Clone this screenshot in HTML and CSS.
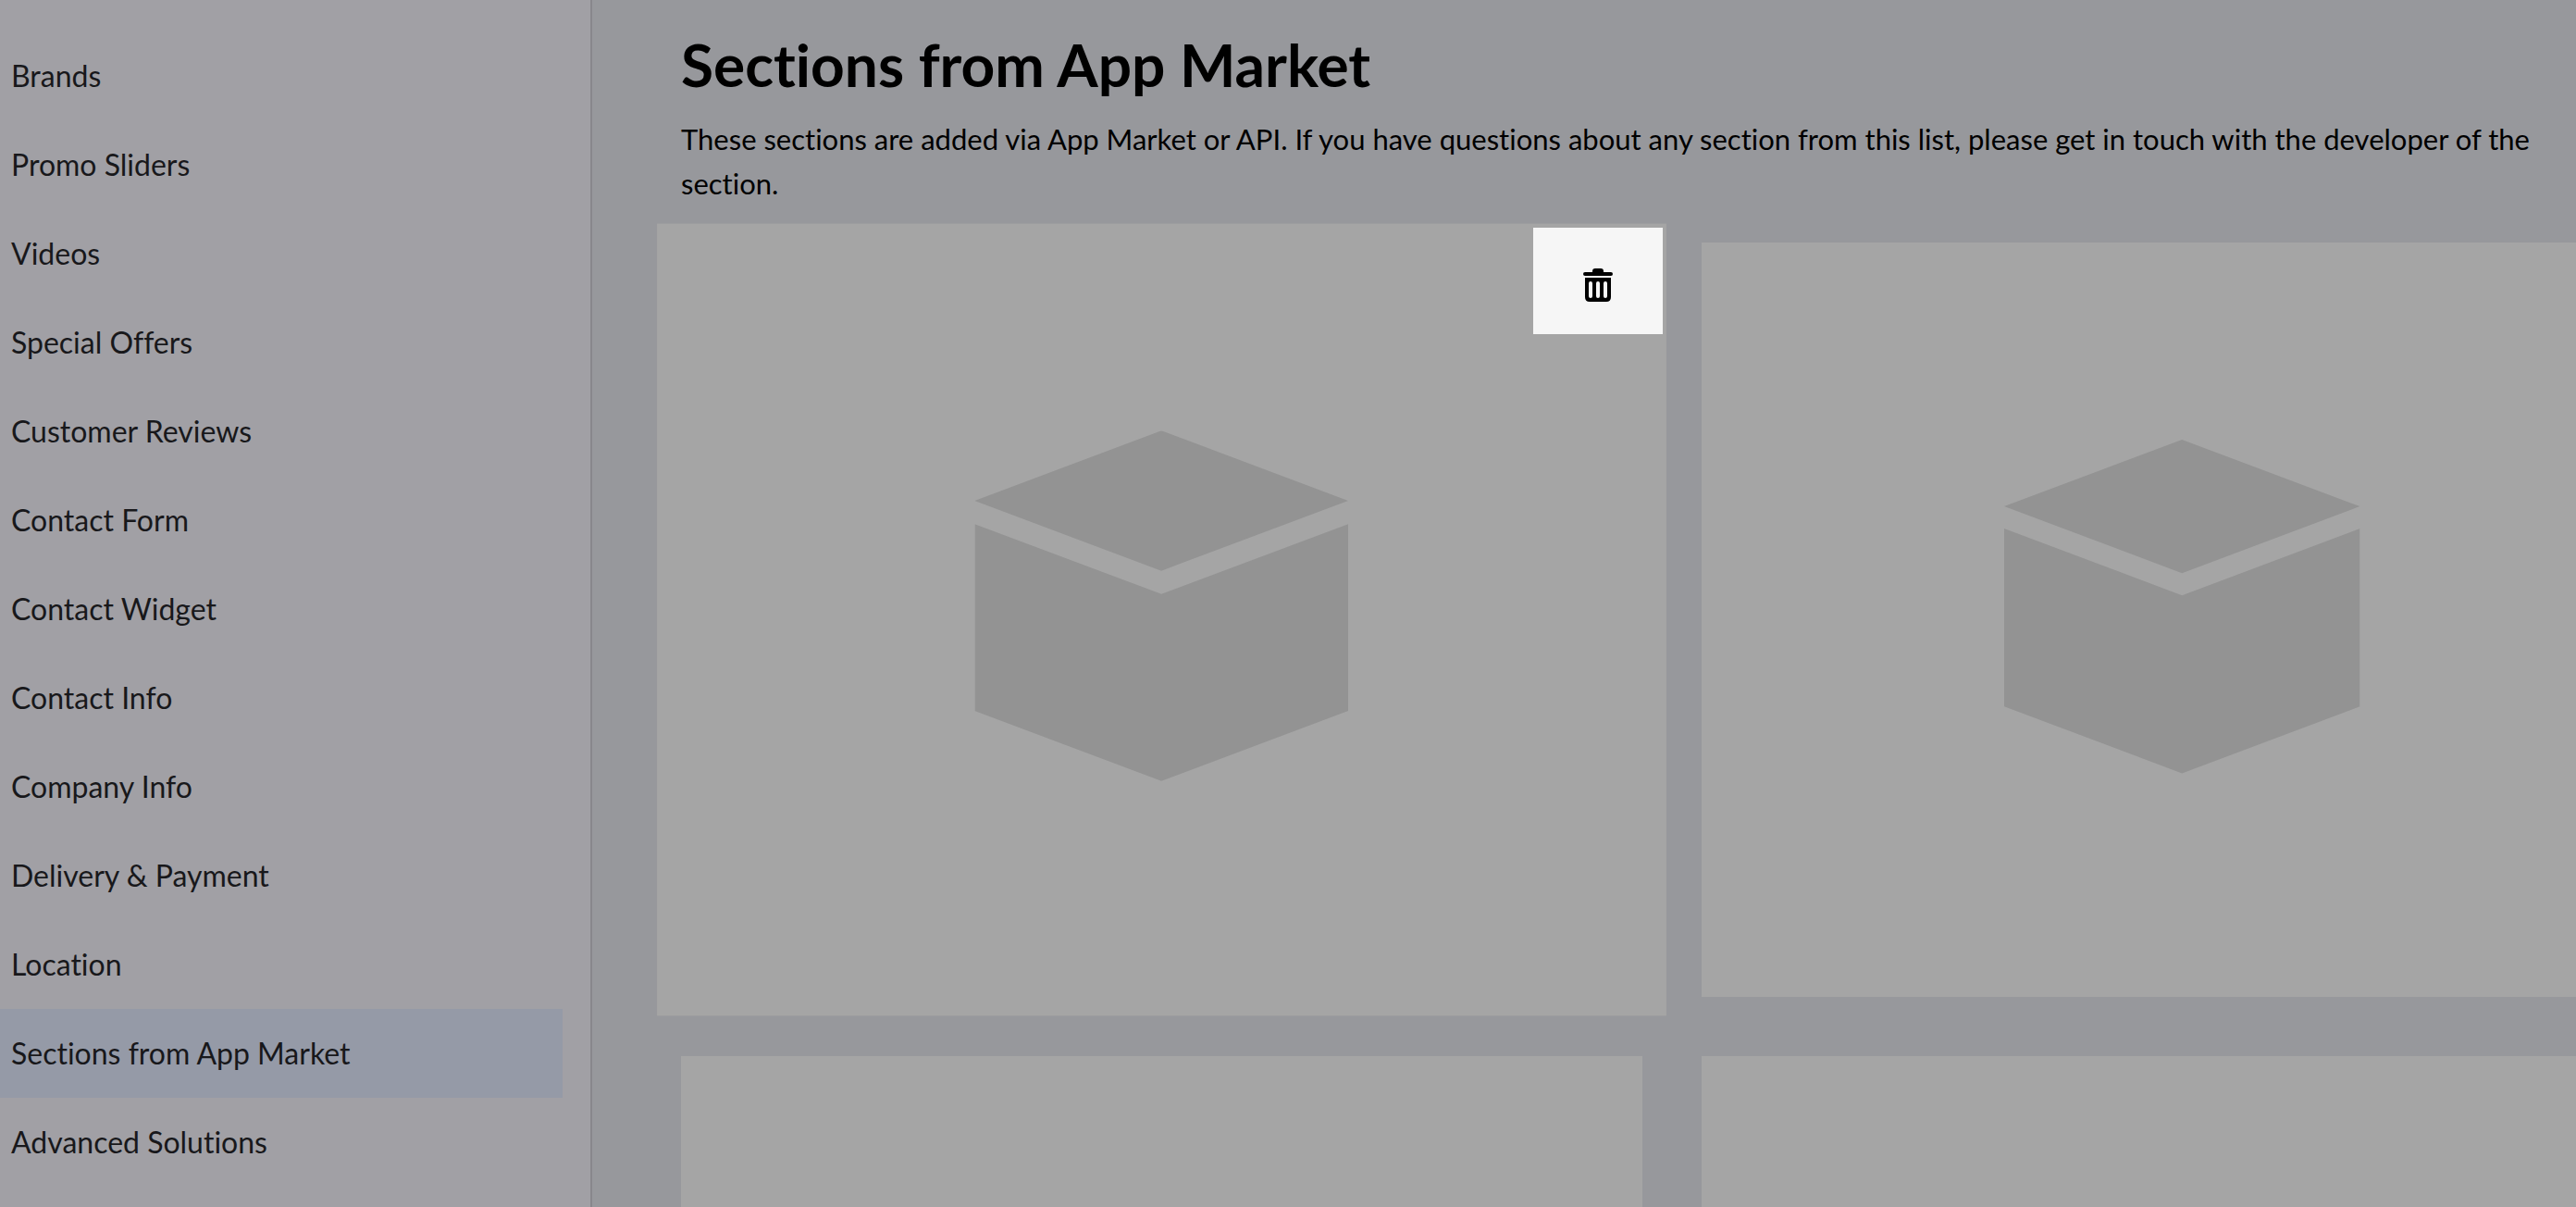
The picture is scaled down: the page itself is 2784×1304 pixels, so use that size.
FILE: index.html
```html
<!DOCTYPE html>
<html lang="en">
<head>
    <meta charset="UTF-8">
    <meta name="viewport" content="width=device-width, initial-scale=1.0">
    <title>Sections from App Market</title>
    <link rel="stylesheet" href="styles.css">
</head>
<body>
    <!-- Shared cube picture -->
    <svg class="sprite" aria-hidden="true">
        <symbol id="cube" viewBox="0 0 16 16">
            <path d="M8 0L16 3L8 6L0 3Z"/>
            <path d="M0 4L8 7L16 4V12L8 15L0 12Z"/>
        </symbol>
    </svg>

    <div class="layout">
        <nav class="sidebar">
            <a class="nav-item" href="#">Brands</a>
            <a class="nav-item" href="#">Promo Sliders</a>
            <a class="nav-item" href="#">Videos</a>
            <a class="nav-item" href="#">Special Offers</a>
            <a class="nav-item" href="#">Customer Reviews</a>
            <a class="nav-item" href="#">Contact Form</a>
            <a class="nav-item" href="#">Contact Widget</a>
            <a class="nav-item" href="#">Contact Info</a>
            <a class="nav-item" href="#">Company Info</a>
            <a class="nav-item" href="#">Delivery &amp; Payment</a>
            <a class="nav-item" href="#">Location</a>
            <a class="nav-item active" href="#" aria-current="page">Sections from App Market</a>
            <a class="nav-item" href="#">Advanced Solutions</a>
        </nav>

        <main class="content">
            <h1 class="title">Sections from App Market</h1>
            <p class="description">These sections are added via App Market or API. If you have questions about any section from this list, please get in touch with the developer of the section.</p>

            <div class="section-grid">
                <div class="section">
                    <div class="card selected">
                        <svg class="cube" aria-hidden="true"><use href="#cube"/></svg>
                    </div>
                    <button class="delete-btn" type="button" aria-label="Delete section">
                        <svg class="trash" viewBox="0 -8 32 44" aria-hidden="true">
                            <path d="M10 4V3Q10 0 13 0H19Q22 0 22 3V4H30A2 2 0 0 1 30 8H2A2 2 0 0 1 2 4Z"/>
                            <path fill-rule="evenodd" d="M2 10H30V31Q30 36 25 36H7Q2 36 2 31ZM6 16V30A2 2 0 0 0 10 30V16A2 2 0 0 0 6 16ZM14 16V30A2 2 0 0 0 18 30V16A2 2 0 0 0 14 16ZM22 16V30A2 2 0 0 0 26 30V16A2 2 0 0 0 22 16Z"/>
                        </svg>
                    </button>
                </div>
                <div class="section">
                    <div class="card">
                        <svg class="cube" aria-hidden="true"><use href="#cube"/></svg>
                    </div>
                </div>
                <div class="section">
                    <div class="card">
                        <svg class="cube" aria-hidden="true"><use href="#cube"/></svg>
                    </div>
                </div>
                <div class="section">
                    <div class="card">
                        <svg class="cube" aria-hidden="true"><use href="#cube"/></svg>
                    </div>
                </div>
            </div>
        </main>
    </div>
</body>
</html>
```
FILE: styles.css
```css
* {
    margin: 0;
    padding: 0;
    box-sizing: border-box;
}

body {
    font-family: Lato, sans-serif;
    font-size: 32px;
    line-height: 48px;
    font-variant-ligatures: none;
    color: #000;
    background: #97989c;
    overflow: hidden;
}

.sprite {
    display: none;
}

.layout {
    display: flex;
    height: 100vh;
}

/* Section categories */
.sidebar {
    flex: 0 0 640px;
    padding: 34px 30px 0 0;
    background: #a1a0a5;
    border-right: 2px solid #88878c;
}

.nav-item {
    display: block;
    padding: 24px 12px;
    color: #18181b;
    text-decoration: none;
}

.nav-item.active {
    background: #959aa7;
}

/* The cards run past the right edge of the window */
.content {
    flex: 1;
    min-width: 0;
    margin-right: -94px;
    padding: 30px 0 0 96px;
}

.title {
    font-size: 64px;
    line-height: 80px;
    font-weight: bold;
}

.description {
    margin-top: 16px;
    margin-bottom: 40px;
    padding-right: 94px;
    font-size: 31px;
}

.section-grid {
    display: grid;
    grid-template-columns: repeat(2, 1fr);
    gap: 64px;
}

.section {
    position: relative;
}

.card {
    display: flex;
    align-items: center;
    justify-content: center;
    aspect-ratio: 1039 / 815;
    padding-bottom: 4px;
    background: #a5a5a5;
}

.card.selected {
    transform: scale(1.05);
}

.cube {
    width: 37%;
    aspect-ratio: 1;
    fill: #939393;
}

.delete-btn {
    position: absolute;
    top: -16px;
    right: -22px;
    display: flex;
    align-items: center;
    justify-content: center;
    width: 140px;
    height: 115px;
    border: none;
    background: #f6f6f6;
    cursor: pointer;
}

.trash {
    width: 32px;
    height: 44px;
    fill: #000;
}
```
